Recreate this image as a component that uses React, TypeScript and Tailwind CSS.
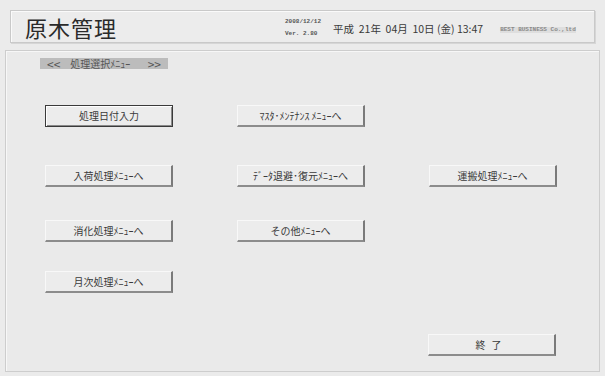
import React from "react";

const jp = { fontFamily: '"Noto Sans CJK JP", "Noto Sans", sans-serif' };
const mono = { fontFamily: '"Liberation Mono", "DejaVu Sans Mono", monospace' };

function Btn({ label, def = false, wide = false }: { label: string; def?: boolean; wide?: boolean }) {
  return (
    <button
      style={jp}
      className={
        "w-[128px] h-[22px] bg-[#ececec] text-[10px] leading-none text-[#3a3a3a] flex items-center justify-center " +
        (def
          ? "border border-[#3a3a3a] shadow-[inset_1px_1px_#ffffff,inset_-1px_-1px_#8a8a8a]"
          : "border-t border-l border-t-[#f8f8f8] border-l-[#f8f8f8] border-r-2 border-b-2 border-r-[#7a7a7a] border-b-[#8c8c8c]") +
        (wide ? " tracking-[6px]" : "")
      }
    >
      {label}
    </button>
  );
}

function Empty() {
  return <div className="w-[128px] h-[22px]" />;
}

export default function App() {
  return (
    <div className="w-[605px] h-[376px] bg-[#ebebeb] overflow-hidden pt-[10px]">
      {/* Header */}
      <div className="mx-[10px] h-[33px] border border-[#c9c9c9] shadow-[inset_1px_1px_#fafafa,1px_1px_#d6d6d6] bg-[#ececec] flex items-center">
        <div style={jp} className="ml-[14px] text-[22px] leading-none text-[#2a2a2a] tracking-[1px]">
          原木管理
        </div>
        <div style={mono} className="ml-[168px] flex flex-col gap-[6px] text-[6px] leading-none font-bold text-[#555] mt-[2px]">
          <span>2008/12/12</span>
          <span>Ver. 2.80</span>
        </div>
        <div style={jp} className="ml-[12px] mt-[5px] text-[10.5px] leading-none text-[#3a3a3a] whitespace-pre">
          平成  21年  04月  10日 (金) 13:47
        </div>
        <div style={mono} className="ml-[17px] mt-[7px] text-[6px] leading-none font-bold text-[#8a8a8a] bg-[#dedede]">
          BEST BUSINESS Co.,ltd
        </div>
      </div>

      {/* Main panel */}
      <div className="mx-[5px] mt-[7px] h-[322px] border border-[#cdcdcd] shadow-[inset_1px_1px_#f7f7f7] bg-[#eaeaea]">
        <div className="ml-[34px] mt-[7px] w-[128px] h-[11px] bg-[#bcbcbc] flex items-center text-[#555] text-[10px] leading-none" style={jp}>
          <span className="ml-[7px] text-[12px]">{"<<"}</span>
          <span className="ml-[10px]">処理選択ﾒﾆｭｰ</span>
          <span className="ml-auto mr-[7px] text-[12px]">{">>"}</span>
        </div>

        <div className="ml-[39px] flex flex-col">
          <div className="mt-[36px] flex gap-[64px]">
            <Btn label="処理日付入力" def />
            <Btn label="ﾏｽﾀ･ﾒﾝﾃﾅﾝｽ ﾒﾆｭｰへ" />
          </div>
          <div className="mt-[38px] flex gap-[64px]">
            <Btn label="入荷処理ﾒﾆｭｰへ" />
            <Btn label="ﾃﾞｰﾀ退避･復元ﾒﾆｭｰへ" />
            <Btn label="運搬処理ﾒﾆｭｰへ" />
          </div>
          <div className="mt-[33px] flex gap-[64px]">
            <Btn label="消化処理ﾒﾆｭｰへ" />
            <Btn label="その他ﾒﾆｭｰへ" />
          </div>
          <div className="mt-[29px] flex gap-[64px]">
            <Btn label="月次処理ﾒﾆｭｰへ" />
          </div>
          <div className="mt-[41px] flex gap-[64px]">
            <Empty />
            <Empty />
            <div className="-ml-[1px]">
              <Btn label="終了" wide />
            </div>
          </div>
        </div>
      </div>
    </div>
  );
}
